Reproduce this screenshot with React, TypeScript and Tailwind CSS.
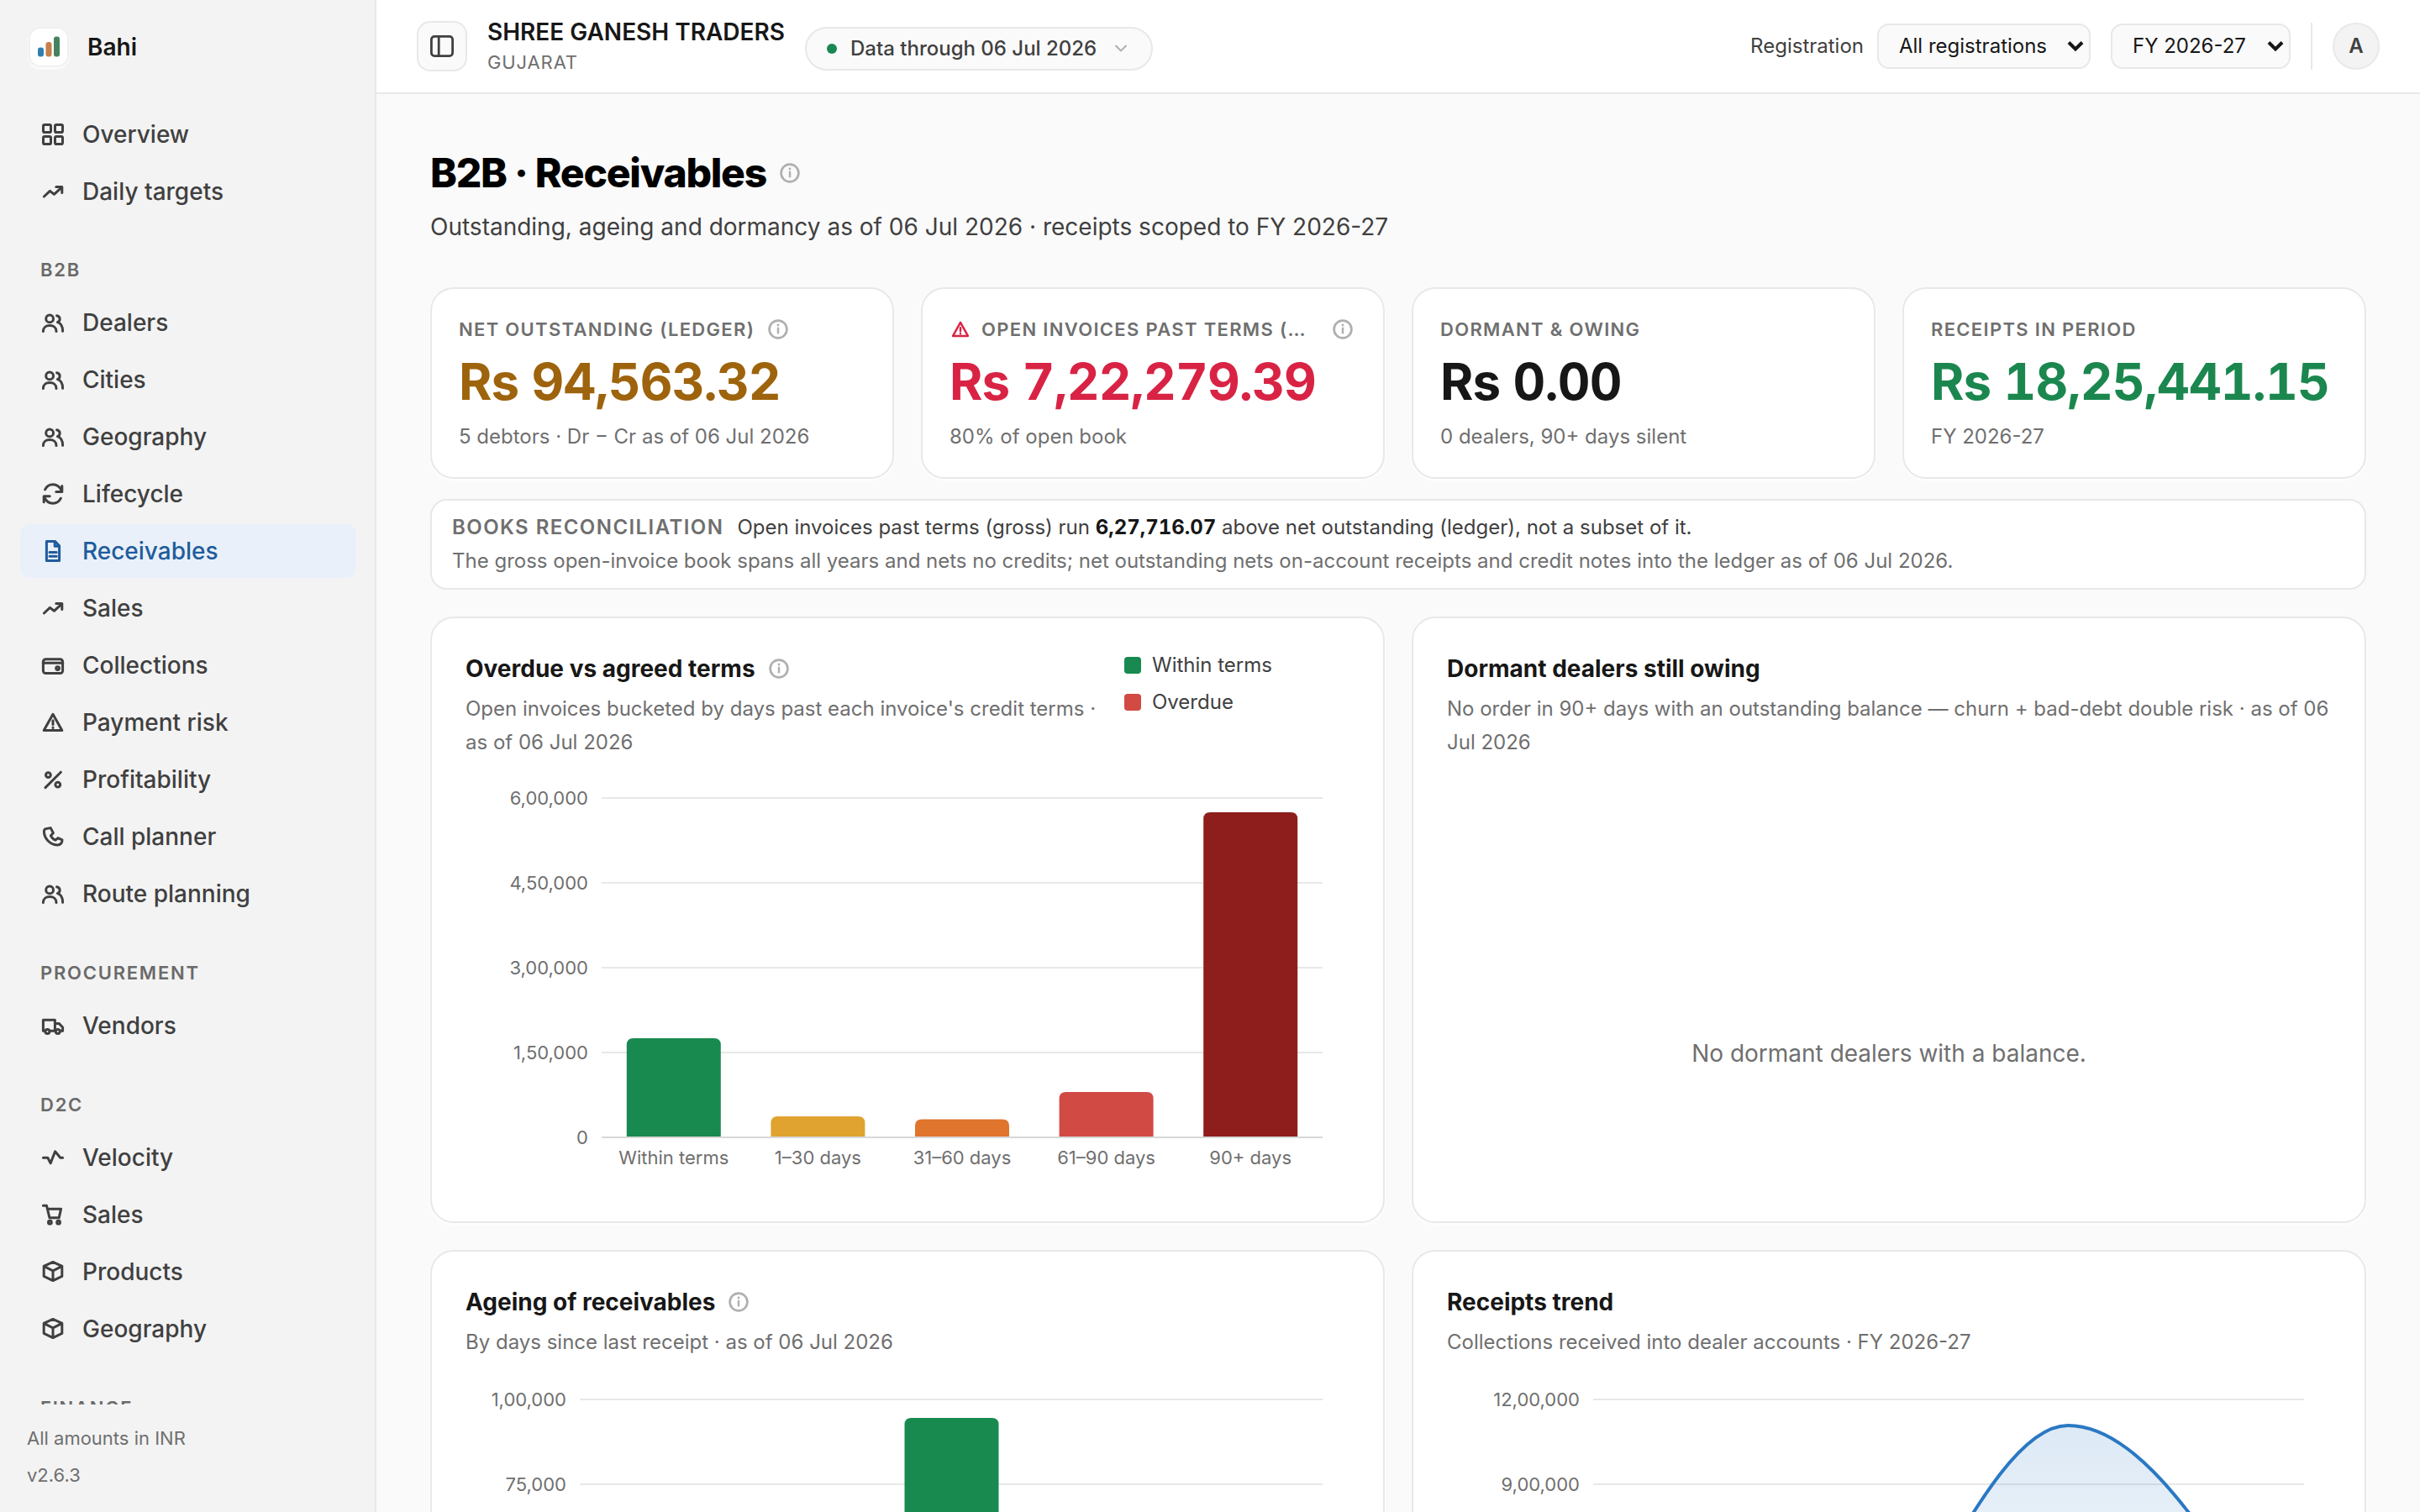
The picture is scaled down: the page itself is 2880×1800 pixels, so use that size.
import type { ReactNode } from "react";

const ICONS: Record<string, ReactNode> = {
  grid: (
    <>
      <rect x="5.5" y="5.5" width="9" height="9" rx="1.6" />
      <rect x="19.5" y="5.5" width="9" height="9" rx="1.6" />
      <rect x="5.5" y="19.5" width="9" height="9" rx="1.6" />
      <rect x="19.5" y="19.5" width="9" height="9" rx="1.6" />
    </>
  ),
  trend: <path d="M6.4 23l7-6.6 5 3.9 9.2-8.5M20.8 11.6h7v7" />,
  users: (
    <>
      <circle cx="13.1" cy="12.4" r="4.4" />
      <path d="M5.4 27.4c0-4.4 3.2-6.8 7.8-6.8s7.8 2.4 7.8 6.8" />
      <path d="M21.6 8.8c2.4.6 3.6 2 3.6 4 0 1.8-1 3.2-2.8 3.8 3.6 1 6.2 4.6 6.2 10.6" />
    </>
  ),
  refresh: (
    <>
      <path d="M7.6 11.8C9.6 7.8 13 5.8 17 5.8c4.6 0 8.4 3 10.4 7.6M27.8 7.6v7h-7" />
      <path d="M26.4 22.2C24.4 26.2 21 28.2 17 28.2c-4.6 0-8.4-3-10.4-7.6M6.2 26.8v-7h7" />
    </>
  ),
  file: (
    <>
      <path d="M9.4 5.6h10.2l5 5.2v17.8H9.4z" />
      <path d="M19.2 5.6v5.6h5.4M13 18.4h8.2M13 23.2h8.2" />
    </>
  ),
  wallet: (
    <>
      <rect x="5.4" y="9.8" width="23.2" height="16.8" rx="3" />
      <path d="M5.4 14.2h23.2" />
      <circle cx="22.6" cy="20.6" r="1.9" />
    </>
  ),
  alert: (
    <>
      <path d="M17 7.2L27.8 26.6H6.2z" />
      <path d="M17 14.8v4.8M17 23v.4" />
    </>
  ),
  percent: (
    <>
      <path d="M8 26.6L26.4 8.2" />
      <circle cx="11.4" cy="11.6" r="2.9" />
      <circle cx="22.8" cy="23.2" r="2.9" />
    </>
  ),
  phone: (
    <path d="M8.8 7.6l5.4-1 3.2 6-3 3.2c1.2 2.4 3 4.4 5.6 5.4l3-2.6 5 2.2c.2 3.8-2.4 6.4-6 6.2C13.2 26.2 6.4 19 6.4 10.8c0-1.6.8-2.8 2.4-3.2z" />
  ),
  truck: (
    <>
      <path d="M7.6 23.2H5.4V10.2h14v13h-6M19.4 14.4h4.8l4.4 4.6v4.2h-2.2" />
      <circle cx="10.4" cy="24" r="2.5" />
      <circle cx="22.8" cy="24" r="2.5" />
    </>
  ),
  pulse: <path d="M5.4 17.2h5.4l3.4 6.6 5.4-14 6.2 7.4h2.8" />,
  cart: (
    <>
      <path d="M5.4 6.2h4l3.6 14.6h11.2l2.4-10.6H10.6" />
      <circle cx="13.4" cy="26.2" r="1.9" />
      <circle cx="23.6" cy="26.2" r="1.9" />
    </>
  ),
  box: <path d="M17 5.4l10.8 5v12L17 27.6 6.2 22.4v-12zM6.2 10.4L17 15.8l10.8-5.4M17 15.8v11.8" />,
};

function Icon({ name, className = "size-[34px]" }: { name: string; className?: string }) {
  return (
    <svg
      viewBox="0 0 34 34"
      fill="none"
      stroke="currentColor"
      strokeWidth="3"
      strokeLinecap="round"
      strokeLinejoin="round"
      className={`shrink-0 ${className}`}
    >
      {ICONS[name]}
    </svg>
  );
}

function Info() {
  return (
    <svg viewBox="0 0 24 24" fill="none" stroke="#b0b0b0" strokeWidth="2.7" className="size-6 shrink-0">
      <circle cx="12" cy="12" r="10.4" />
      <path d="M12 10.8v5.4" strokeLinecap="round" strokeWidth="2.5" />
      <circle cx="12" cy="7" r="1.4" fill="#b0b0b0" stroke="none" />
    </svg>
  );
}

interface NavSection {
  title?: string;
  items: [string, string][];
}

const NAV: NavSection[] = [
  {
    items: [
      ["grid", "Overview"],
      ["trend", "Daily targets"],
    ],
  },
  {
    title: "B2B",
    items: [
      ["users", "Dealers"],
      ["users", "Cities"],
      ["users", "Geography"],
      ["refresh", "Lifecycle"],
      ["file", "Receivables"],
      ["trend", "Sales"],
      ["wallet", "Collections"],
      ["alert", "Payment risk"],
      ["percent", "Profitability"],
      ["phone", "Call planner"],
      ["users", "Route planning"],
    ],
  },
  { title: "Procurement", items: [["truck", "Vendors"]] },
  {
    title: "D2C",
    items: [
      ["pulse", "Velocity"],
      ["cart", "Sales"],
      ["box", "Products"],
      ["box", "Geography"],
    ],
  },
  { title: "Finance", items: [] },
];

function Sidebar() {
  return (
    <aside className="flex h-full w-[448px] shrink-0 flex-col border-r-2 border-[#e8e8e8] bg-[#f3f3f3]">
      <div className="flex h-28 shrink-0 items-center gap-[22px] pl-[34px]">
        <div className="flex size-12 items-center justify-center rounded-[14px] border-2 border-[#f0f0f0] bg-white shadow-[0_2px_3px_#ffffff]">
          <svg viewBox="0 0 44 44" className="size-11">
            <rect x="9" y="22.5" width="7" height="11" rx="3" fill="#2f7fb0" />
            <rect x="18.5" y="16" width="7" height="17.5" rx="3" fill="#c87f4a" />
            <rect x="28" y="9.5" width="7" height="24" rx="3" fill="#45835f" />
          </svg>
        </div>
        <span className="text-[28px] font-semibold text-[#171717]">Bahi</span>
      </div>

      <nav className="min-h-0 flex-1 overflow-hidden px-6 pt-4">
        {NAV.map((section, i) => (
          <div key={i} className={section.title ? "" : "-mb-px"}>
            {section.title && (
              <h2 className="flex h-[93px] items-center pt-8 pl-6 text-[22px] font-semibold tracking-[0.08em] text-[#6a6a6a] uppercase">
                {section.title}
              </h2>
            )}
            <ul className="flex flex-col gap-1">
              {section.items.map(([icon, label], j) => (
                <li
                  key={j}
                  className={`flex h-16 w-[400px] items-center gap-[18px] rounded-xl pl-[22px] text-[28px] font-medium ${
                    label === "Receivables" ? "bg-[#e9f0f9] text-[#1f5c9c]" : "text-[#404040]"
                  }`}
                >
                  <Icon name={icon} />
                  {label}
                </li>
              ))}
            </ul>
          </div>
        ))}
      </nav>

      <div className="flex h-32 shrink-0 flex-col pt-[18px] pl-8 text-[22px] leading-[44px] text-[#6f6f6f]">
        <span>All amounts in INR</span>
        <span>v2.6.3</span>
      </div>
    </aside>
  );
}

function Select({ value, className }: { value: string; className: string }) {
  return (
    <button
      className={`flex h-[54px] items-center justify-between rounded-[14px] border-2 border-[#e8e8e8] bg-[#fafafa] pr-1.5 pl-6 text-2xl text-[#171717] ${className}`}
    >
      {value}
      <svg viewBox="0 0 20 14" fill="none" stroke="#171717" strokeWidth="4" className="h-[14px] w-5">
        <path d="M2 2.5l8 8 8-8" />
      </svg>
    </button>
  );
}

function Topbar() {
  return (
    <header className="flex h-28 shrink-0 items-center border-b-2 border-[#e8e8e8] bg-white px-12">
      <button className="flex size-[60px] items-center justify-center rounded-2xl border-2 border-[#e8e8e8] bg-[#fafafa] text-[#404040]">
        <svg viewBox="0 0 28 26" fill="none" stroke="currentColor" strokeWidth="2.8" className="h-[26px] w-7">
          <rect x="1.4" y="1.4" width="25.2" height="23.2" rx="3.6" />
          <path d="M10.2 1.4v23.2" />
        </svg>
      </button>
      <div className="ml-6 flex flex-col pt-0.5">
        <span className="text-[28px] leading-9 font-semibold text-[#171717]">SHREE GANESH TRADERS</span>
        <span className="text-[22px] leading-9 tracking-[0.04em] text-[#6f6f6f]">GUJARAT</span>
      </div>
      <div className="mt-[6px] ml-6 flex h-[52px] w-[414px] items-center rounded-full border-2 border-[#e8e8e8] bg-[#fafafa] pl-6">
        <span className="size-3 rounded-full bg-[#1a8754]" />
        <span className="ml-4 text-2xl font-medium text-[#404040]">Data through 06 Jul 2026</span>
        <svg viewBox="0 0 16 10" fill="none" stroke="#b0b0b0" strokeWidth="2" className="ml-[21px] h-[10px] w-4">
          <path d="M2 1.5l6 6 6-6" strokeLinecap="round" strokeLinejoin="round" />
        </svg>
      </div>

      <div className="ml-auto flex items-center">
        <span className="text-2xl text-[#404040]">Registration</span>
        <Select value="All registrations" className="ml-4 w-[254px]" />
        <Select value="FY 2026-27" className="ml-6 w-[214px]" />
        <span className="ml-6 h-14 w-0.5 bg-[#e8e8e8]" />
        <span className="ml-6 flex size-14 items-center justify-center rounded-full border-2 border-[#e8e8e8] bg-[#f3f3f3] text-2xl font-semibold text-[#404040]">
          A
        </span>
      </div>
    </header>
  );
}

interface StatProps {
  label: string;
  value: string;
  note: string;
  color: string;
  info?: boolean;
  alert?: boolean;
}

function StatCard({ label, value, note, color, info, alert }: StatProps) {
  return (
    <div className="h-[228px] min-w-0 rounded-[28px] border-2 border-[#e8e8e8] bg-white px-8 pt-7 shadow-[0_2px_4px_#ffffff]">
      <div className="flex h-10 items-center text-[22px] font-semibold text-[#6f6f6f]">
        {alert && <Icon name="alert" className="mr-[11px] -ml-px size-7 text-[#d92344]" />}
        <span className="max-w-[398px] truncate tracking-[0.06em] uppercase">{label}</span>
        {info && (
          <span className={alert ? "mr-1 ml-auto" : "ml-4"}>
            <Info />
          </span>
        )}
      </div>
      <p
        className={`mt-2 text-[60px] leading-[68px] font-bold tracking-[-0.014em] whitespace-nowrap tabular-nums ${color}`}
      >
        {value}
      </p>
      <p className="mt-[14px] text-2xl leading-9 text-[#6f6f6f]">{note}</p>
    </div>
  );
}

interface PanelProps {
  title: string;
  subtitle: string;
  info?: boolean;
  legend?: ReactNode;
  children: ReactNode;
}

function Panel({ title, subtitle, info, legend, children }: PanelProps) {
  return (
    <section className="flex h-[722px] min-w-0 flex-col rounded-[28px] border-2 border-[#e8e8e8] bg-white px-10 pt-10 shadow-[0_2px_4px_#ffffff]">
      <div className="flex justify-between">
        <div className="min-w-0 flex-1">
          <h3 className="flex h-10 items-center gap-4 text-[28px] font-[650] text-[#171717]">
            {title}
            {info && <Info />}
          </h3>
          <p className="mt-2 text-2xl leading-10 text-[#6f6f6f]">{subtitle}</p>
        </div>
        {legend}
      </div>
      {children}
    </section>
  );
}

function LegendItem({ color, label }: { color: string; label: string }) {
  return (
    <span className="flex h-8 items-center gap-[13px]">
      <i className={`size-5 rounded-[4px] ${color}`} />
      {label}
    </span>
  );
}

interface ChartProps {
  left: number;
  right: number;
  ticks: string[];
  className: string;
  children: ReactNode;
}

// Gridlines are 101px apart, the last one is the axis.
function Chart({ left, right, ticks, className, children }: ChartProps) {
  return (
    <svg viewBox="0 0 1052 494" className={`h-[494px] w-[1052px] shrink-0 ${className}`} fontSize="22" fill="#6f6f6f">
      {ticks.map((tick, i) => (
        <g key={tick}>
          <rect
            x={left}
            y={29 + i * 101}
            width={right - left}
            height="2"
            fill={i === 4 ? "#d8d8d8" : "#e8e8e8"}
          />
          <text x={left - 16} y={38 + i * 101} textAnchor="end">
            {tick}
          </text>
        </g>
      ))}
      {children}
    </svg>
  );
}

function Bar({ cx, top, fill }: { cx: number; top: number; fill: string }) {
  const l = cx - 56;
  const r = cx + 56;
  return <path d={`M${l} 433V${top + 8}q0-8 8-8H${r - 8}q8 0 8 8V433z`} fill={fill} />;
}

const OVERDUE = [
  { label: "Within terms", top: 316, fill: "#188a4f" },
  { label: "1–30 days", top: 409, fill: "#e0a32f" },
  { label: "31–60 days", top: 412.5, fill: "#e0752d" },
  { label: "61–90 days", top: 380, fill: "#d14a44" },
  { label: "90+ days", top: 47, fill: "#8e1e1b" },
];

function OverdueChart() {
  return (
    <Chart left={162} right={1020} ticks={["6,00,000", "4,50,000", "3,00,000", "1,50,000", "0"]} className="mt-4">
      {OVERDUE.map((d, i) => (
        <g key={d.label}>
          <Bar cx={247.8 + i * 171.6} top={d.top} fill={d.fill} />
          <text x={247.8 + i * 171.6} y="466" textAnchor="middle">
            {d.label}
          </text>
        </g>
      ))}
    </Chart>
  );
}

function AgeingChart() {
  return (
    <Chart left={136} right={1020} ticks={["1,00,000", "75,000", "50,000", "25,000", "0"]} className="mt-[18px]">
      <Bar cx={578.5} top={52} fill="#188a4f" />
    </Chart>
  );
}

const TREND = "M456.5 416C550.5 346 644.5 61 739 61C833 61 927 221 1021 382";

function TrendChart() {
  return (
    <Chart
      left={174}
      right={1020}
      ticks={["12,00,000", "9,00,000", "6,00,000", "3,00,000", "0"]}
      className="mt-[18px]"
    >
      <defs>
        <linearGradient id="trend" x1="0" y1="61" x2="0" y2="434" gradientUnits="userSpaceOnUse">
          <stop offset="0" stopColor="#2a78c3" stopOpacity="0.16" />
          <stop offset="1" stopColor="#2a78c3" stopOpacity="0.02" />
        </linearGradient>
      </defs>
      <path d={`${TREND}V434H456.5z`} fill="url(#trend)" />
      <path d={TREND} fill="none" stroke="#2a78c3" strokeWidth="4" />
    </Chart>
  );
}

export default function App() {
  return (
    <div className="flex h-[1800px] w-[2880px] overflow-hidden bg-[#fafafa] font-['Inter',sans-serif] antialiased">
      <Sidebar />
      <div className="flex min-w-0 flex-1 flex-col">
        <Topbar />
        <main className="min-h-0 flex-1 overflow-hidden px-16 pt-[66px]">
          <div className="flex h-14 items-center gap-4">
            <h1 className="text-[48px] font-extrabold tracking-[-0.026em] text-black">B2B · Receivables</h1>
            <Info />
          </div>
          <p className="mt-[14px] h-11 text-[28px] leading-[44px] text-[#404040]">
            Outstanding, ageing and dormancy as of 06 Jul 2026 · receipts scoped to FY 2026-27
          </p>

          <div className="mt-[50px] grid grid-cols-4 gap-8">
            <StatCard
              label="Net outstanding (ledger)"
              value="Rs 94,563.32"
              note="5 debtors · Dr − Cr as of 06 Jul 2026"
              color="text-[#9e630d]"
              info
            />
            <StatCard
              label="Open invoices past terms (gross)"
              value="Rs 7,22,279.39"
              note="80% of open book"
              color="text-[#d92344]"
              info
              alert
            />
            <StatCard label="Dormant & owing" value="Rs 0.00" note="0 dealers, 90+ days silent" color="text-[#171717]" />
            <StatCard label="Receipts in period" value="Rs 18,25,441.15" note="FY 2026-27" color="text-[#1b874f]" />
          </div>

          <div className="mt-6 h-[108px] rounded-[20px] border-2 border-[#e8e8e8] bg-white px-6 pt-3 text-2xl leading-10">
            <p className="text-[#404040]">
              <span className="mr-4 font-semibold tracking-[0.06em] text-[#6f6f6f] uppercase">Books reconciliation</span>
              Open invoices past terms (gross) run{" "}
              <b className="font-bold text-[#171717] tabular-nums">6,27,716.07</b> above net outstanding (ledger), not a
              subset of it.
            </p>
            <p className="text-[#6f6f6f]">
              The gross open-invoice book spans all years and nets no credits; net outstanding nets on-account receipts
              and credit notes into the ledger as of 06 Jul 2026.
            </p>
          </div>

          <div className="mt-8 grid grid-cols-2 gap-8">
            <Panel
              title="Overdue vs agreed terms"
              subtitle="Open invoices bucketed by days past each invoice's credit terms · as of 06 Jul 2026"
              info
              legend={
                <div className="ml-8 flex w-[268px] flex-col gap-3 text-2xl text-[#404040]">
                  <LegendItem color="bg-[#188a4f]" label="Within terms" />
                  <LegendItem color="bg-[#d14a44]" label="Overdue" />
                </div>
              }
            >
              <OverdueChart />
            </Panel>
            <Panel
              title="Dormant dealers still owing"
              subtitle="No order in 90+ days with an outstanding balance — churn + bad-debt double risk · as of 06 Jul 2026"
            >
              <div className="flex flex-1 items-center justify-center pt-[150px] text-[28px] text-[#6f6f6f]">
                No dormant dealers with a balance.
              </div>
            </Panel>
            <Panel title="Ageing of receivables" subtitle="By days since last receipt · as of 06 Jul 2026" info>
              <AgeingChart />
            </Panel>
            <Panel title="Receipts trend" subtitle="Collections received into dealer accounts · FY 2026-27">
              <TrendChart />
            </Panel>
          </div>
        </main>
      </div>
    </div>
  );
}
